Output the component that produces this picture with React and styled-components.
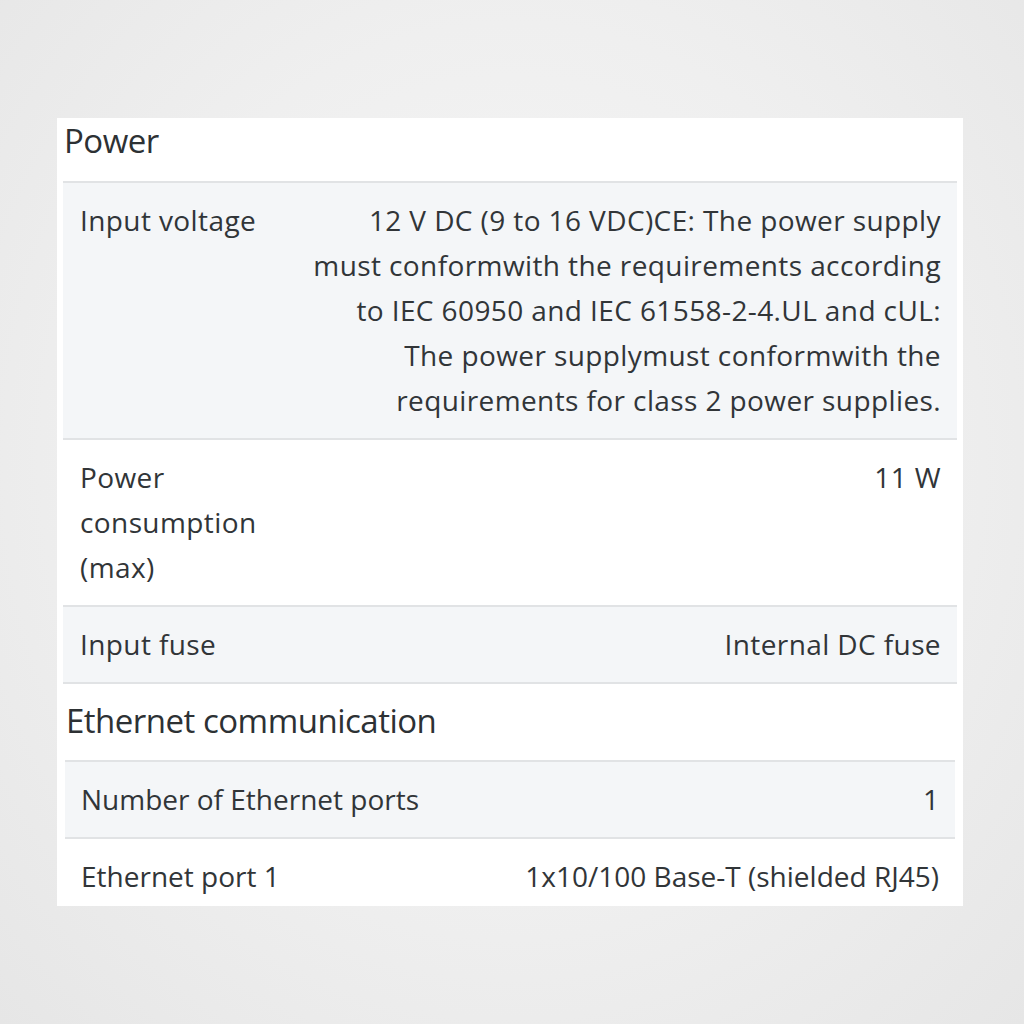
import React from 'react';
import styled, { createGlobalStyle } from 'styled-components';

const GlobalStyle = createGlobalStyle`
  html, body {
    margin: 0;
    padding: 0;
  }
  body {
    font-family: "Open Sans", "Noto Sans", sans-serif;
    color: #313538;
  }
`

const Page = styled.div`
  width: 1024px;
  height: 1024px;
  box-sizing: border-box;
  padding: 118px 0 0 57px;
  display: flex;
  align-items: flex-start;
  background: radial-gradient(ellipse at 50% 45%, #f7f7f7 0%, #efefef 55%, #e6e6e6 100%);
`

const Card = styled.div`
  width: 906px;
  height: 788px;
  box-sizing: border-box;
  padding: 0 6px;
  background: #fff;
  overflow: hidden;
`

const SectionTitle = styled.h2`
  margin: 0;
  box-sizing: border-box;
  padding: 0 0 ${({ $lift }) => $lift}px ${({ $indent }) => $indent || 1}px;
  height: ${({ $height }) => $height}px;
  display: flex;
  align-items: center;
  font: 400 33px "Open Sans", sans-serif;
  letter-spacing: -0.5px;
  color: #2d3134;
`

const Table = styled.div`
  margin: 0 ${({ $inset }) => $inset || 0}px;
  border-top: 2px solid #e1e3e5;
`

const Row = styled.div`
  display: grid;
  grid-template-columns: ${({ $cols }) => $cols || '216px 1fr'};
  padding: 15px 16px ${({ $last }) => ($last ? 6 : 15)}px ${({ $inset }) => $inset || 17}px;
  background: ${({ $shaded }) => ($shaded ? '#f4f6f8' : '#fff')};
  border-bottom: ${({ $last }) => ($last ? 'none' : '2px solid #e1e3e5')};
  font-size: 28px;
  letter-spacing: ${({ $tight }) => ($tight ? '0' : '0.4px')};
  line-height: 45px;
`

const Label = styled.div`
  padding-right: 20px;
  white-space: nowrap;
`

const Value = styled.div`
  text-align: right;
  white-space: nowrap;
`

export default function App() {
  return (
    <>
      <GlobalStyle />
      <Page>
        <Card>
          <SectionTitle $height={63} $lift={18}>Power</SectionTitle>
          <Table>
            <Row $shaded>
              <Label>Input voltage</Label>
              <Value>
                12 V DC (9 to 16 VDC)CE: The power supply<br />
                must conformwith the requirements according<br />
                to IEC 60950 and IEC 61558-2-4.UL and cUL:<br />
                The power supplymust conformwith the<br />
                requirements for class 2 power supplies.
              </Value>
            </Row>
            <Row>
              <Label>Power<br />consumption<br />(max)</Label>
              <Value>11 W</Value>
            </Row>
            <Row $shaded>
              <Label>Input fuse</Label>
              <Value>Internal DC fuse</Value>
            </Row>
          </Table>
          <SectionTitle $height={76} $lift={3} $indent={3}>Ethernet communication</SectionTitle>
          <Table $inset={2}>
            <Row $shaded $tight $inset={16} $cols="auto 1fr">
              <Label>Number of Ethernet ports</Label>
              <Value>1</Value>
            </Row>
            <Row $last $tight $inset={16} $cols="auto 1fr">
              <Label>Ethernet port 1</Label>
              <Value>1x10/100 Base-T (shielded RJ45)</Value>
            </Row>
          </Table>
        </Card>
      </Page>
    </>
  );
}
